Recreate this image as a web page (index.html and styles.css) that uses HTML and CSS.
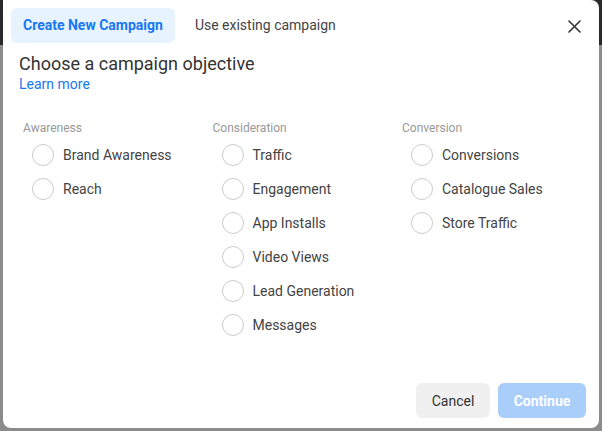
FILE: index.html
```html
<!DOCTYPE html>
<html>
<head>
<meta charset="utf-8">
<link rel="stylesheet" href="styles.css">
</head>
<body>
<div class="modal">
  <div class="header">
    <div class="tabs">
      <div class="tab active">Create New Campaign</div>
      <div class="tab">Use existing campaign</div>
    </div>
    <div class="close">
      <svg width="13" height="13" viewBox="0 0 13 13"><path d="M1 1L12 12M12 1L1 12" stroke="#333" stroke-width="1.6" stroke-linecap="round"/></svg>
    </div>
  </div>
  <div class="title">Choose a campaign objective</div>
  <a class="learn">Learn more</a>
  <div class="columns">
    <div class="col">
      <div class="col-head">Awareness</div>
      <div class="opt"><span class="radio"></span>Brand Awareness</div>
      <div class="opt"><span class="radio"></span>Reach</div>
    </div>
    <div class="col">
      <div class="col-head">Consideration</div>
      <div class="opt"><span class="radio"></span>Traffic</div>
      <div class="opt"><span class="radio"></span>Engagement</div>
      <div class="opt"><span class="radio"></span>App Installs</div>
      <div class="opt"><span class="radio"></span>Video Views</div>
      <div class="opt"><span class="radio"></span>Lead Generation</div>
      <div class="opt"><span class="radio"></span>Messages</div>
    </div>
    <div class="col">
      <div class="col-head">Conversion</div>
      <div class="opt"><span class="radio"></span>Conversions</div>
      <div class="opt"><span class="radio"></span>Catalogue Sales</div>
      <div class="opt"><span class="radio"></span>Store Traffic</div>
    </div>
  </div>
  <div class="footer">
    <button class="btn cancel">Cancel</button>
    <button class="btn continue">Continue</button>
  </div>
</div>
</body>
</html>
```
FILE: styles.css
```css
html, body {
  margin: 0;
  padding: 0;
  height: 100%;
  overflow: hidden;
}
body {
  background: linear-gradient(to bottom, #2a2a2a 0, #2a2a2a 45px, #8c8c8c 45px, #8c8c8c 100%);
  font-family: Roboto, "Liberation Sans", Arial, sans-serif;
}
.modal {
  margin-left: 3px;
  width: 596px;
  height: 428px;
  background: #fff;
  border-radius: 0 8px 8px 8px;
  box-sizing: border-box;
  padding: 8px 0 0 8px;
  display: flex;
  flex-direction: column;
}
.header {
  display: flex;
  align-items: center;
  justify-content: space-between;
  padding-right: 18px;
}
.tabs {
  display: flex;
  gap: 8px;
}
.tab {
  height: 35px;
  line-height: 35px;
  padding: 0 12px;
  font-size: 14px;
  color: #444;
  border-radius: 6px;
}
.tab.active {
  background: #e7f3ff;
  color: #1877f2;
  font-weight: 700;
}
.close {
  display: flex;
  margin-top: 1px;
}
.title {
  margin: 9px 0 0 8px;
  font-size: 18px;
  line-height: 24px;
  color: #333;
}
.learn {
  margin-left: 8px;
  font-size: 14px;
  line-height: 16px;
  color: #1877f2;
}
.columns {
  display: flex;
  margin: 28px 0 0 12px;
}
.col {
  width: 189.5px;
  display: flex;
  flex-direction: column;
}
.col-head {
  font-size: 12px;
  line-height: 16px;
  color: #999;
  margin-bottom: 2px;
}
.opt {
  display: flex;
  align-items: center;
  height: 34px;
  padding-left: 9px;
  font-size: 14px;
  color: #444;
}
.radio {
  width: 20px;
  height: 20px;
  border: 1px solid #ccc;
  border-radius: 50%;
  margin-right: 9px;
  flex: none;
}
.footer {
  margin-top: auto;
  margin-bottom: 10px;
  display: flex;
  justify-content: flex-end;
  gap: 8px;
  padding-right: 13px;
}
.btn {
  height: 35px;
  border: none;
  border-radius: 6px;
  font-family: inherit;
  font-size: 14px;
  padding: 0;
}
.cancel {
  width: 74px;
  background: #f0f0f0;
  color: #333;
}
.continue {
  width: 88px;
  background: #a9cefa;
  color: #fff;
  font-weight: 700;
}
```
